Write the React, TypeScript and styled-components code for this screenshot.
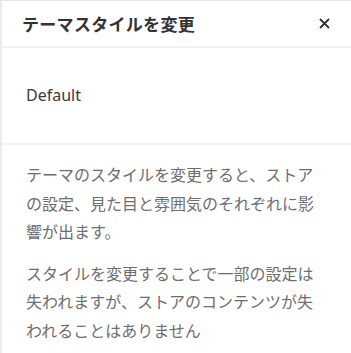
import React from "react";
import styled, { createGlobalStyle } from "styled-components";

const GlobalStyle = createGlobalStyle`
  html, body {
    margin: 0;
    padding: 0;
    background: #ffffff;
  }
  body {
    font-family: "Noto Sans CJK JP", "Noto Sans", sans-serif;
  }
`;

const Panel = styled.div`
  width: 351px;
  height: 353px;
  box-sizing: border-box;
  border-top: 1px solid #e6e6e6;
  border-left: 2px solid #ececec;
  background: #fff;
  display: flex;
  flex-direction: column;
  overflow: hidden;
`;

const Header = styled.div`
  height: 45px;
  display: flex;
  align-items: center;
  justify-content: space-between;
  padding: 0 20px 0 20px;
  border-bottom: 2px solid #f2f2f2;
`;

const Title = styled.h2`
  margin: 0;
  font-size: 17px;
  font-weight: 700;
  color: #333;
  letter-spacing: 0.3px;
`;

const CloseButton = styled.button`
  border: none;
  background: none;
  padding: 0;
  width: 14px;
  height: 14px;
  display: flex;
  align-items: center;
  justify-content: center;
  cursor: pointer;
`;

const Section = styled.div<{ $height?: number }>`
  padding: 0 24px;
  border-bottom: 2px solid #f2f2f2;
  height: ${(p) => (p.$height ? `${p.$height}px` : "auto")};
  display: flex;
  align-items: center;
`;

const Label = styled.span`
  font-family: "Noto Sans", sans-serif;
  font-size: 16px;
  color: #3a3a3a;
  margin-bottom: 2px;
`;

const Body = styled.div`
  padding: 15px 24px 0 24px;
  display: flex;
  flex-direction: column;
  gap: 13px;
`;

const Text = styled.p`
  margin: 0;
  font-size: 16px;
  line-height: 28.6px;
  color: #6e6e6e;
`;

function App() {
  return (
    <>
      <GlobalStyle />
      <Panel>
        <Header>
          <Title>テーマスタイルを変更</Title>
          <CloseButton aria-label="閉じる">
            <svg width="11" height="11" viewBox="0 0 11 11">
              <path d="M1 1L10 10M10 1L1 10" stroke="#333" strokeWidth="1.8" />
            </svg>
          </CloseButton>
        </Header>
        <Section $height={95}>
          <Label>Default</Label>
        </Section>
        <Body>
          <Text>
            テーマのスタイルを変更すると、ストアの設定、見た目と雰囲気のそれぞれに影響が出ます。
          </Text>
          <Text>
            スタイルを変更することで一部の設定は失われますが、ストアのコンテンツが失われることはありません
          </Text>
        </Body>
      </Panel>
    </>
  );
}

export default App;
